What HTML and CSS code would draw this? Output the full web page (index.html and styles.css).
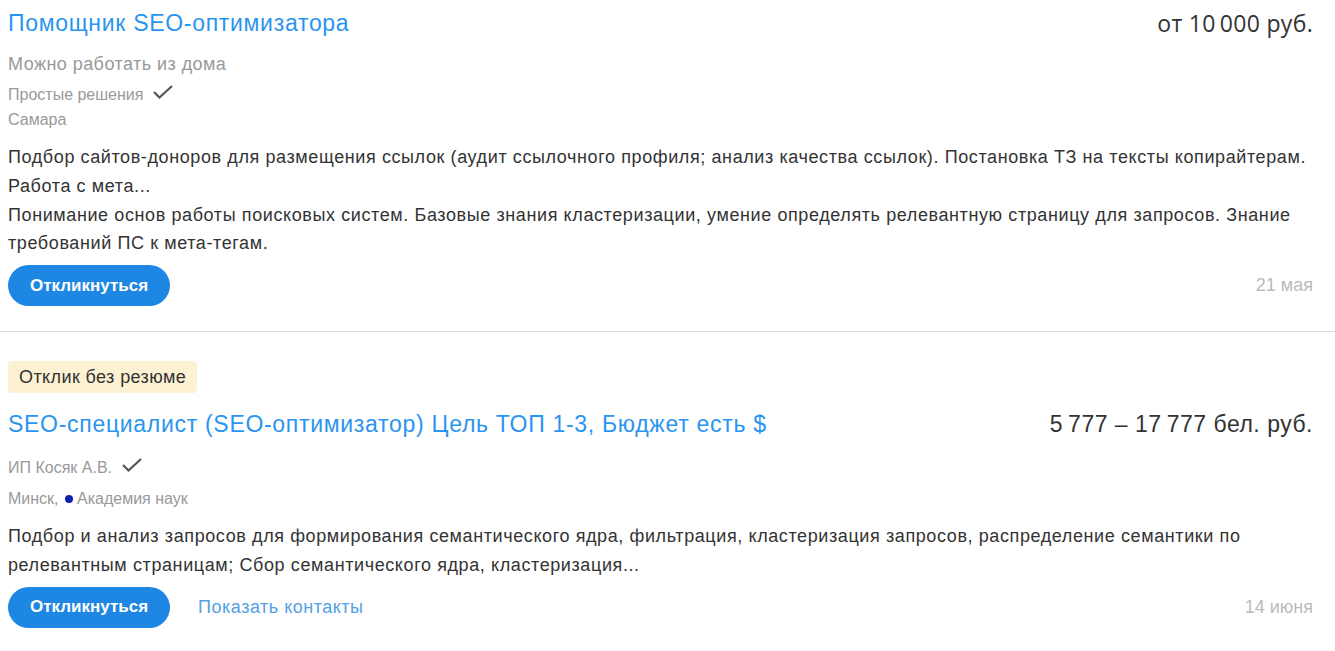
FILE: index.html
```html
<!DOCTYPE html>
<html lang="ru">
<head>
  <meta charset="UTF-8">
  <meta name="viewport" content="width=device-width, initial-scale=1.0">
  <title>Вакансии</title>
  <link rel="stylesheet" href="styles.css">
</head>
<body>
  <div class="vacancy-list">
    <div class="vacancy">
      <div class="vacancy-head">
        <a class="vacancy-title" href="#">Помощник SEO-оптимизатора</a>
        <span class="vacancy-salary salary-alt">от 10&#8201;000 руб.</span>
      </div>
      <div class="vacancy-remote">Можно работать из дома</div>
      <div class="vacancy-company">
        Простые решения
        <svg class="check" width="22" height="16" viewBox="0 0 22 16"><polyline points="2,8 7.5,13.5 20,2" fill="none" stroke="#555" stroke-width="2.2"/></svg>
      </div>
      <div class="vacancy-city">Самара</div>
      <div class="vacancy-desc">
        Подбор сайтов-доноров для размещения ссылок (аудит ссылочного профиля; анализ качества ссылок). Постановка ТЗ на тексты копирайтерам. Работа с мета...<br>
        Понимание основ работы поисковых систем. Базовые знания кластеризации, умение определять релевантную страницу для запросов. Знание требований ПС к мета-тегам.
      </div>
      <div class="vacancy-foot">
        <div class="vacancy-actions">
          <button class="btn-respond">Откликнуться</button>
        </div>
        <span class="vacancy-date">21 мая</span>
      </div>
    </div>

    <div class="vacancy">
      <span class="badge">Отклик без резюме</span>
      <div class="vacancy-head">
        <a class="vacancy-title" href="#">SEO-специалист (SEO-оптимизатор) Цель ТОП 1-3, Бюджет есть $</a>
        <span class="vacancy-salary">5&#8201;777 – 17&#8201;777 бел. руб.</span>
      </div>
      <div class="vacancy-company company-gap">
        ИП Косяк А.В.
        <svg class="check" width="22" height="16" viewBox="0 0 22 16"><polyline points="2,8 7.5,13.5 20,2" fill="none" stroke="#555" stroke-width="2.2"/></svg>
      </div>
      <div class="vacancy-city city-gap">Минск, <span class="metro-dot"></span>Академия наук</div>
      <div class="vacancy-desc">
        Подбор и анализ запросов для формирования семантического ядра, фильтрация, кластеризация запросов, распределение семантики по релевантным страницам; Сбор семантического ядра, кластеризация...
      </div>
      <div class="vacancy-foot">
        <div class="vacancy-actions">
          <button class="btn-respond">Откликнуться</button>
          <a class="link-contacts" href="#">Показать контакты</a>
        </div>
        <span class="vacancy-date">14 июня</span>
      </div>
    </div>
  </div>
</body>
</html>
```

FILE: styles.css
```css
body {
  margin: 0;
  font-family: "Liberation Sans", Arial, sans-serif;
  color: #333;
  background: #fff;
}
.vacancy {
  padding: 8px 22px 25px 8px;
  border-bottom: 1px solid #ddd;
}
.vacancy + .vacancy {
  padding-top: 29px;
}
.vacancy-head {
  display: flex;
  justify-content: space-between;
  align-items: center;
  line-height: 30px;
}
.vacancy-title {
  color: #2a95f0;
  font-size: 23px;
  letter-spacing: 0.7px;
  text-decoration: none;
}
.vacancy-salary {
  font-size: 23px;
  letter-spacing: 0.5px;
  color: #333;
}
.salary-alt {
  font-family: "Open Sans", "Liberation Sans", sans-serif;
  letter-spacing: 0.3px;
}
.vacancy-remote {
  margin-top: 14px;
  font-size: 18px;
  letter-spacing: 0.45px;
  line-height: 24px;
  color: #999;
}
.vacancy-company {
  margin-top: 9px;
  font-size: 16px;
  line-height: 20px;
  color: #999;
  display: flex;
  align-items: center;
}
.company-gap {
  margin-top: 19px;
}
.check {
  margin-left: 9px;
  margin-top: -6px;
}
.vacancy-city {
  margin-top: 5px;
  font-size: 16px;
  line-height: 20px;
  color: #999;
}
.city-gap {
  margin-top: 11px;
}
.metro-dot {
  display: inline-block;
  width: 8px;
  height: 8px;
  border-radius: 50%;
  background: #0b1fb0;
  margin: 0 4px 1px 2px;
}
.vacancy-desc {
  margin-top: 13px;
  font-size: 18px;
  letter-spacing: 0.6px;
  line-height: 28.8px;
  color: #333;
}
.vacancy-foot {
  display: flex;
  justify-content: space-between;
  align-items: center;
  margin-top: 7px;
}
.vacancy-actions {
  display: flex;
  align-items: center;
  gap: 28px;
}
.btn-respond {
  height: 41px;
  padding: 0 22px;
  border: none;
  border-radius: 21px;
  background: #1e87e3;
  color: #fff;
  font-family: "Liberation Sans", Arial, sans-serif;
  font-size: 17px;
  font-weight: bold;
  cursor: pointer;
}
.link-contacts {
  color: #55a0e6;
  font-size: 18px;
  letter-spacing: 0.5px;
  text-decoration: none;
}
.vacancy-date {
  color: #bbb;
  font-size: 18px;
}
.badge {
  display: inline-block;
  background: #fcf2d3;
  border-radius: 4px;
  padding: 0 11px;
  line-height: 32px;
  font-size: 18px;
  letter-spacing: 0.4px;
  color: #333;
  margin-bottom: 16px;
}
```
